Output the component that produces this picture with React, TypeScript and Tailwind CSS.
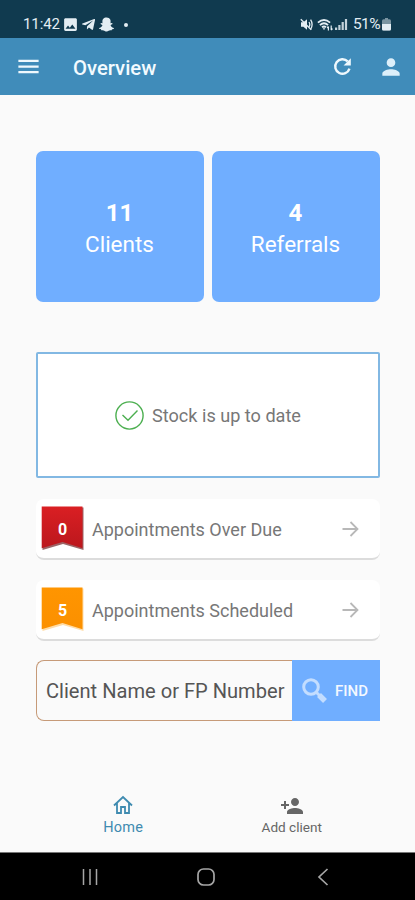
import { FaSnapchatGhost, FaTelegramPlane } from 'react-icons/fa';
import { MdImage, MdMenu, MdPerson, MdPersonAdd } from 'react-icons/md';

/* ── Status bar ───────────────────────────────────── */
const StatusBar = () => (
  <div className="flex h-[38px] items-start justify-between bg-[#103a4f] pl-[23px] pr-[24px] pt-[15px] text-[#e3edf3]">
    <div className="flex h-[19px] items-center">
      <span className="w-[38px] whitespace-nowrap text-[15px] tracking-[-0.1px]">11:42</span>
      <MdImage className="ml-px size-[17px]" />
      <FaTelegramPlane className="ml-[2px] size-[15px]" />
      <FaSnapchatGhost className="ml-[3px] size-[15px]" />
      <span className="ml-[10px] size-[4px] rounded-full bg-[#e3edf3]" />
    </div>
    <div className="flex h-[19px] items-center">
      <svg className="h-[13px] w-[13px]" viewBox="0 0 13 13" fill="none" stroke="currentColor">
        <path d="M1 4.2h2.4L7 1.2v10.6L3.4 8.8H1z" fill="currentColor" stroke="none" />
        <path d="M.8 1.2l10.4 10.6" strokeWidth="1.3" />
        <path d="M9 4q1.6 2.5 0 5M10.6 1.7q3 4.8 0 9.6" strokeWidth="1.3" />
      </svg>
      <svg className="ml-[4px] h-[14px] w-[17px]" viewBox="0 0 17 14" fill="none" stroke="currentColor">
        <path d="M.9 4.7Q7-.7 13.1 4.7M2.9 7.1Q7 3.5 11.1 7.1M5 9.3q2-1.7 4 0" strokeWidth="1.8" />
        <path d="M5.6 10.2h2.8L7 12z" fill="currentColor" stroke="none" />
        <path d="M11.4 12.6V8.6M10.1 10l1.3-1.5M14.2 7.6v4.4M15.5 10.6l-1.3 1.5" strokeWidth="1.2" />
      </svg>
      <svg className="ml-[1px] h-[13px] w-[13px]" viewBox="0 0 13 13" fill="currentColor">
        <path d="M0 9.5h2.2V12H0zM3.3 7h2.2v5H3.3zM6.6 4h2.2v8H6.6zM9.9 1h2.2v11H9.9z" opacity=".85" />
      </svg>
      <span className="ml-[5px] w-[29px] whitespace-nowrap text-[15.5px] tracking-[-0.6px]">51%</span>
      <svg className="h-[13px] w-[9px]" viewBox="0 0 9 13" fill="currentColor">
        <path d="M3 0h3v1.3h1.5Q9 1.5 9 3v8q0 1.5-1.5 1.5h-6Q0 12.5 0 11V3q0-1.5 1.5-1.7H3z" opacity=".5" />
        <path d="M0 6h9v5q0 1.5-1.5 1.5h-6Q0 12.5 0 11z" />
      </svg>
    </div>
  </div>
);

/* ── App bar ──────────────────────────────────────── */
const AppBar = () => (
  <header className="flex h-[57px] items-center bg-[#408cba] pl-[15px] pr-[11px] text-[#eef8fd]">
    <MdMenu className="size-[27px]" />
    <h1 className="ml-[31px] flex-1 pt-[3px] text-[20.3px] font-medium text-[#f3fbff]">Overview</h1>
    <svg className="size-[25px]" viewBox="0 0 24 24" fill="none" stroke="currentColor" strokeWidth="2.3">
      <path d="M18.700 14A7 7 0 1 1 17 7.100" />
      <path d="M20 4v7h-7z" fill="currentColor" stroke="none" />
    </svg>
    <MdPerson className="ml-[23px] size-[26px] text-[#dceffa]" />
  </header>
);

const stats = [
  { value: '11', label: 'Clients' },
  { value: '4', label: 'Referrals' },
];

const appointments = [
  { count: 0, label: 'Appointments Over Due', top: '#da1f23', bottom: '#bb171d', shade: '#7c3033' },
  { count: 5, label: 'Appointments Scheduled', top: '#ff9500', bottom: '#fb9000', shade: '#ffd08a' },
];

const Ribbon = ({ id, count, top, bottom, shade }: { id: string; count: number; top: string; bottom: string; shade: string }) => (
  <div className="grid h-[45px] w-[43px] shrink-0">
    <svg className="col-start-1 row-start-1 h-[45px] w-[43px]" viewBox="0 0 43 45">
      <defs>
        <linearGradient id={id} x1="0" y1="0" x2="0" y2="1">
          <stop offset="0" stopColor={top} />
          <stop offset="1" stopColor={bottom} />
        </linearGradient>
      </defs>
      <path d="M1.5 1.5h41v42.5L22 38 1.5 44z" fill={shade} opacity=".75" />
      <path d="M.7.5h40.8v41.8L21.5 36 .7 42.3z" fill={`url(#${id})`} />
    </svg>
    <span className="col-start-1 row-start-1 pt-[14px] text-center text-[16px] leading-[20px] font-bold text-white">
      {count}
    </span>
  </div>
);

/* ── System navigation ────────────────────────────── */
const SystemNav = () => (
  <div className="flex h-[48px] items-center justify-between border-t border-[#777] bg-black pl-[82px] pr-[86px] text-[#a6a6a6]">
    <svg className="h-[18px] w-[16px]" viewBox="0 0 16 18" stroke="currentColor" strokeWidth="1.5">
      <path d="M1.5 1v16M8 1v16M14.5 1v16" />
    </svg>
    <svg className="mr-[3px] h-[18px] w-[18px]" viewBox="0 0 18 18" fill="none" stroke="currentColor" strokeWidth="1.7">
      <rect x="1" y="1" width="16" height="16" rx="5.5" />
    </svg>
    <svg className="h-[18px] w-[12px]" viewBox="0 0 12 18" fill="none" stroke="currentColor" strokeWidth="1.7">
      <path d="M10.5 1L2 9l8.5 8" />
    </svg>
  </div>
);

export default function App() {
  return (
    <div className="flex h-[900px] w-[415px] flex-col overflow-hidden bg-[#fafafa] font-['Roboto',sans-serif]">
      <StatusBar />
      <AppBar />

      <main className="flex-1 pl-[36px] pr-[35px] pt-[56px]">
        {/* Totals */}
        <div className="grid grid-cols-2 gap-[8px]">
          {stats.map((stat) => (
            <div
              key={stat.label}
              className="flex h-[151px] flex-col items-center rounded-[7px] bg-[#70aeff] pt-[47px] pr-px text-white"
            >
              <span className="text-[24px] leading-[30px] font-bold">{stat.value}</span>
              <span className="text-[22.5px] leading-[33px]">{stat.label}</span>
            </div>
          ))}
        </div>

        {/* Stock */}
        <div className="mt-[50px] flex h-[126px] items-center justify-center gap-[8px] rounded-[2px] border-2 border-[#82b8e3] bg-white">
          <svg className="size-[29px]" viewBox="0 0 29 29" fill="none" stroke="#4caf50" strokeWidth="1.4">
            <circle cx="14.5" cy="14.5" r="13.6" />
            <path d="M7.5 14l5.5 5.2 9.5-9.7" />
          </svg>
          <span className="pt-px text-[18.1px] text-[#777]">Stock is up to date</span>
        </div>

        {/* Appointments */}
        <div className="mt-[21px] flex flex-col gap-[20px]">
          {appointments.map((item) => (
            <div
              key={item.label}
              className="flex h-[61px] items-center rounded-[8px] border-b-2 border-[#dcdcdc] bg-white pl-[5px] pr-[21px]"
            >
              <Ribbon id={`ribbon-${item.count}`} count={item.count} top={item.top} bottom={item.bottom} shade={item.shade} />
              <span className="ml-[8px] flex-1 pt-px text-[18px] whitespace-nowrap text-[#777]">{item.label}</span>
              <svg className="h-[16px] w-[17px]" viewBox="0 0 17 16" fill="none" stroke="#b8b8b8" strokeWidth="1.8">
                <path d="M.5 8h15M8.5 1l7 7-7 7" />
              </svg>
            </div>
          ))}
        </div>

        {/* Search */}
        <div className="mt-[19px] flex h-[61px]">
          <div className="flex w-[256px] items-center rounded-l-[8px] border border-r-0 border-[#c69a78] pt-[2px] pl-[9px] text-[20.1px] whitespace-nowrap text-[#555]">
            Client Name or FP Number
          </div>
          <button className="flex flex-1 items-center bg-[#70aeff] pl-[10px] text-[15px] font-medium text-[#f4f9ff]">
            <svg className="mr-[8px] size-[25px]" viewBox="0 0 25 25" fill="none" stroke="#c3ddff">
              <circle cx="9" cy="9" r="7.3" strokeWidth="3" />
              <path d="M14 14l4 4" strokeWidth="3" />
              <path d="M17 17l6 6" strokeWidth="5.5" />
            </svg>
            <span className="pt-[2px]">FIND</span>
          </button>
        </div>
      </main>

      <nav className="flex h-[62px] pl-[39px] pr-[39px]">
        <div className="flex flex-1 flex-col items-center pt-[5px] text-[#3f8bb0]">
          <svg className="h-[20px] w-[20px]" viewBox="0 0 20 20" fill="none" stroke="currentColor" strokeWidth="1.8">
            <path d="M1 10.5L10 2l9 8.5M4 8v10h4v-6h4v6h4V8" />
          </svg>
          <span className="mt-[3px] text-[14.5px] leading-[20px] tracking-[0.3px]">Home</span>
        </div>
        <div className="flex flex-1 flex-col items-center pt-[4px] text-[#666]">
          <MdPersonAdd className="size-[24px]" />
          <span className="text-[13.6px] leading-[18px]">Add client</span>
        </div>
      </nav>
      <SystemNav />
    </div>
  );
}
